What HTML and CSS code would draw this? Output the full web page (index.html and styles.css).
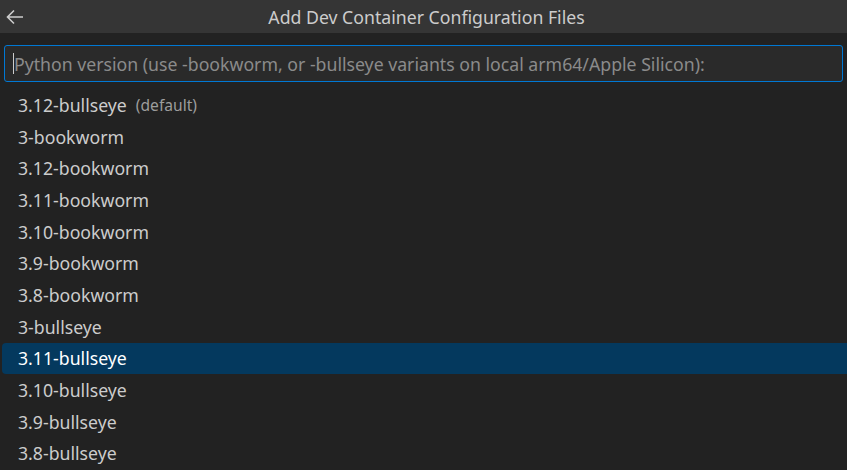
FILE: index.html
```html
<!DOCTYPE html>
<html>
<head>
<meta charset="utf-8">
<link rel="stylesheet" href="styles.css">
</head>
<body>
<div class="quick">
  <div class="titlebar">
    <span class="back"><svg width="18" height="16" viewBox="0 0 18 16"><path d="M8 1.5 L1.5 8 L8 14.5 M1.5 8 H17" fill="none" stroke="#cccccc" stroke-width="1.6"/></svg></span>
    <span class="title">Add Dev Container Configuration Files</span>
  </div>
  <div class="inputwrap">
    <div class="input"><span class="caret"></span><span class="ph">Python version (use -bookworm, or -bullseye variants on local arm64/Apple Silicon):</span></div>
  </div>
  <div class="list">
    <div class="row">3.12-bullseye<span class="desc">(default)</span></div>
    <div class="row">3-bookworm</div>
    <div class="row">3.12-bookworm</div>
    <div class="row">3.11-bookworm</div>
    <div class="row">3.10-bookworm</div>
    <div class="row">3.9-bookworm</div>
    <div class="row">3.8-bookworm</div>
    <div class="row">3-bullseye</div>
    <div class="row sel">3.11-bullseye</div>
    <div class="row">3.10-bullseye</div>
    <div class="row">3.9-bullseye</div>
    <div class="row">3.8-bullseye</div>
  </div>
</div>
</body>
</html>
```
FILE: styles.css
```css
html, body {
  margin: 0;
  padding: 0;
  background: #222222;
  overflow: hidden;
}
body {
  width: 847px;
  height: 470px;
  font-family: "Noto Sans", "Open Sans", sans-serif;
  color: #cccccc;
}
.quick {
  display: flex;
  flex-direction: column;
}
.titlebar {
  height: 33px;
  background: #353535;
  display: flex;
  align-items: center;
  justify-content: center;
  position: relative;
  font-size: 17.7px;
}
.back {
  position: absolute;
  left: 6px;
  top: 9px;
  display: flex;
}
.title {
  color: #cccccc;
  margin-left: 6px;
}
.inputwrap {
  padding: 12px 4px 0 4px;
}
.input {
  height: 35px;
  border: 1px solid #0078d4;
  border-radius: 3px;
  background: #2a2a2a;
  display: flex;
  align-items: center;
  padding-left: 8px;
  font-size: 17.7px;
}
.caret {
  width: 1px;
  height: 21px;
  background: #cccccc;
  margin-right: 0;
}
.ph {
  color: #8b8b8b;
  white-space: nowrap;
}
.list {
  padding-top: 7px;
}
.row {
  height: 31.7px;
  display: flex;
  align-items: center;
  padding-left: 16px;
  margin-left: 2px;
  font-size: 17.7px;
  color: #cccccc;
  border-radius: 4px 0 0 4px;
}
.row.sel {
  background: #04395e;
  color: #ffffff;
}
.desc {
  margin-left: 9px;
  font-size: 15.6px;
  color: #9d9d9d;
}
```
